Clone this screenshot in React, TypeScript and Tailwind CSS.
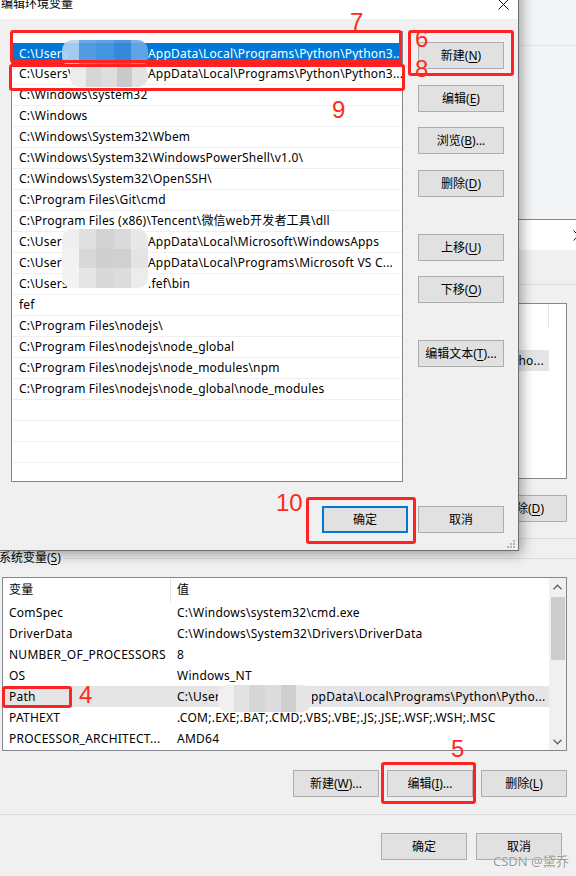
import type { ReactNode } from "react";

type PathRow = { lead?: string; text: string; selected?: boolean };

const EDIT_ROWS: PathRow[] = [
  { lead: "C:\\Users", text: "AppData\\Local\\Programs\\Python\\Python3..", selected: true },
  { lead: "C:\\Users\\", text: "AppData\\Local\\Programs\\Python\\Python3..." },
  { text: "C:\\Windows\\system32" },
  { text: "C:\\Windows" },
  { text: "C:\\Windows\\System32\\Wbem" },
  { text: "C:\\Windows\\System32\\WindowsPowerShell\\v1.0\\" },
  { text: "C:\\Windows\\System32\\OpenSSH\\" },
  { text: "C:\\Program Files\\Git\\cmd" },
  { text: "C:\\Program Files (x86)\\Tencent\\微信web开发者工具\\dll" },
  { lead: "C:\\Users", text: "AppData\\Local\\Microsoft\\WindowsApps" },
  { lead: "C:\\Users", text: "AppData\\Local\\Programs\\Microsoft VS C..." },
  { lead: "C:\\Users", text: ".fef\\bin" },
  { text: "fef" },
  { text: "C:\\Program Files\\nodejs\\" },
  { text: "C:\\Program Files\\nodejs\\node_global" },
  { text: "C:\\Program Files\\nodejs\\node_modules\\npm" },
  { text: "C:\\Program Files\\nodejs\\node_global\\node_modules" },
  { text: "" },
  { text: "" },
  { text: "" },
  { text: "" },
];

const SYSTEM_VARS = [
  { name: "ComSpec", value: "C:\\Windows\\system32\\cmd.exe" },
  { name: "DriverData", value: "C:\\Windows\\System32\\Drivers\\DriverData" },
  { name: "NUMBER_OF_PROCESSORS", value: "8" },
  { name: "OS", value: "Windows_NT" },
  { name: "Path", value: "", selected: true },
  { name: "PATHEXT", value: ".COM;.EXE;.BAT;.CMD;.VBS;.VBE;.JS;.JSE;.WSF;.WSH;.MSC" },
  { name: "PROCESSOR_ARCHITECT...", value: "AMD64" },
];

function WinButton({ children, focused = false }: { children?: ReactNode; focused?: boolean }) {
  return (
    <div
      className={[
        "flex h-[27px] w-[86px] shrink-0 items-center justify-center bg-[#e1e1e1] text-[12px] text-black",
        focused ? "border-2 border-[#0078d7]" : "border border-[#adadad]",
      ].join(" ")}
    >
      {children}
    </div>
  );
}

function Key({ k }: { k: string }) {
  return <span className="underline underline-offset-2">{k}</span>;
}

function CloseGlyph() {
  return (
    <svg width="11" height="11" viewBox="0 0 11 11" aria-hidden="true">
      <path d="M0.5 0.5 L10.5 10.5 M10.5 0.5 L0.5 10.5" stroke="#111" strokeWidth="1" />
    </svg>
  );
}

function Chevron({ down = false }: { down?: boolean }) {
  return (
    <svg width="9" height="6" viewBox="0 0 9 6" aria-hidden="true">
      <path
        d={down ? "M0.5 0.8 L4.5 4.8 L8.5 0.8" : "M0.5 5.2 L4.5 1.2 L8.5 5.2"}
        fill="none"
        stroke="#606060"
        strokeWidth="1.3"
      />
    </svg>
  );
}

function Mosaic({ className, cells }: { className: string; cells: string[] }) {
  return (
    <div className={["absolute grid overflow-hidden rounded-[10px]", className].join(" ")}>
      {cells.map((cell, i) => (
        <div key={i} className={cell} />
      ))}
    </div>
  );
}

function RedBox({ className }: { className: string }) {
  return <div className={["absolute rounded-[3px] border-[3px] border-[#ff2222]", className].join(" ")} />;
}

function Mark({ n, className }: { n: string; className: string }) {
  return (
    <span
      className={[
        "absolute font-['Liberation_Sans',Arial,sans-serif] text-[24px] leading-none text-[#ff2a1c]",
        className,
      ].join(" ")}
    >
      {n}
    </span>
  );
}

function BackWindow() {
  return (
    <div className="flex flex-col">
      {/* window further behind */}
      <div className="h-[219px] bg-[#f4f5f7]">
        <div className="h-[46px] border-b border-[#e4e5e7]" />
      </div>

      {/* 环境变量 */}
      <div className="border-t border-[#858585]">
        <div className="flex h-[30px] items-center justify-end overflow-hidden bg-white">
          <div className="-mr-[8px]">
            <CloseGlyph />
          </div>
        </div>

        <div className="flex flex-col pl-[2px] pr-[9px]">
          <div className="-mr-[9px] mt-[34px] border-t border-[#dcdcdc]" />

          {/* 用户变量 list, mostly under the dialog */}
          <div className="mt-[18px] flex h-[176px] flex-col overflow-hidden border border-[#828790] bg-white">
            <div className="flex h-[25px] shrink-0">
              <div className="w-[168px]" />
              <div className="w-[378px] border-r border-[#e5e5e5]" />
            </div>
            <div className="h-[21px]" />
            <div className="flex h-[21px] w-[546px] items-center justify-end bg-[#e5e5e5] pr-[5px] tracking-[0.25px]">
              Pytho...
            </div>
          </div>

          <div className="mt-[16px] flex justify-end gap-[8px]">
            <WinButton />
            <WinButton />
            <WinButton>
              删除(<Key k="D" />)
            </WinButton>
          </div>

          <div className="-mr-[9px] mt-[16px] border-t border-[#dcdcdc]" />

          {/* 系统变量 */}
          <div className="-ml-[3px] -mr-[9px] mt-[11px] flex h-[16px] items-center gap-[3px]">
            <span className="whitespace-nowrap">
              系统变量(<Key k="S" />)
            </span>
            <div className="flex-1 border-t border-[#dcdcdc]" />
          </div>

          <div className="mt-[11px] flex h-[174px] overflow-hidden border border-[#828790] bg-white">
            <div className="flex flex-1 flex-col tracking-[0.25px]">
              <div className="flex h-[24px] shrink-0">
                <div className="flex w-[168px] items-center border-r border-[#e5e5e5] pl-[6px]">变量</div>
                <div className="flex items-center pl-[6px]">值</div>
              </div>
              {SYSTEM_VARS.map((v) => (
                <div
                  key={v.name}
                  className={[
                    "flex h-[21px] shrink-0 items-center whitespace-nowrap",
                    v.selected ? "bg-[#e5e5e5]" : "",
                  ].join(" ")}
                >
                  <div className="w-[168px] shrink-0 overflow-hidden pl-[6px]">{v.name}</div>
                  {v.selected ? (
                    <div className="flex pl-[6px]">
                      <span className="w-[126px] shrink-0">C:\Users\</span>
                      <span>AppData\Local\Programs\Python\Pytho...</span>
                    </div>
                  ) : (
                    <div className="pl-[6px]">{v.value}</div>
                  )}
                </div>
              ))}
            </div>
            <div className="flex w-[17px] shrink-0 flex-col bg-[#f0f0f0]">
              <div className="flex h-[17px] items-center justify-center">
                <Chevron />
              </div>
              <div className="ml-[2px] mr-[1px] mt-[2px] h-[63px] bg-[#cdcdcd]" />
              <div className="flex-1" />
              <div className="flex h-[17px] items-center justify-center">
                <Chevron down />
              </div>
            </div>
          </div>

          <div className="mt-[19px] flex justify-end gap-[8px]">
            <WinButton>
              新建(<Key k="W" />)...
            </WinButton>
            <WinButton>
              编辑(<Key k="I" />)...
            </WinButton>
            <WinButton>
              删除(<Key k="L" />)
            </WinButton>
          </div>

          <div className="-ml-[2px] -mr-[9px] mt-[17px] border-t border-[#dcdcdc]" />

          <div className="mt-[18px] flex justify-end gap-[9px] pr-[5px]">
            <WinButton>确定</WinButton>
            <WinButton>取消</WinButton>
          </div>
        </div>
      </div>
    </div>
  );
}

function EditDialog() {
  return (
    <div className="absolute left-[-1px] top-[-12px] flex h-[563px] w-[520px] flex-col border border-[#6d6d6d] bg-[#f0f0f0] shadow-[3px_3px_12px_rgba(0,0,0,0.35)]">
      <div className="flex h-[30px] shrink-0 items-center justify-between bg-white pl-[1px] pr-[9px]">
        <span>编辑环境变量</span>
        <CloseGlyph />
      </div>

      <div className="flex flex-1 flex-col pl-[11px] pr-[14px] pt-[12px]">
        <div className="flex">
          <div className="h-[451px] w-[392px] overflow-hidden border border-[#828790] bg-white pt-[11px] tracking-[0.2px]">
            {EDIT_ROWS.map((row, i) => (
              <div
                key={i}
                className={[
                  "flex h-[21px] items-center overflow-hidden whitespace-nowrap pl-[7px]",
                  row.selected ? "bg-[#0078d7] text-white" : "border-b border-[#f0f0f0]",
                ].join(" ")}
              >
                {row.lead ? <span className="w-[129px] shrink-0">{row.lead}</span> : null}
                <span>{row.text}</span>
              </div>
            ))}
          </div>

          <div className="ml-[15px] flex w-[86px] flex-col pt-[11px]">
            <WinButton>
              新建(<Key k="N" />)
            </WinButton>
            <div className="mt-[16px]">
              <WinButton>
                编辑(<Key k="E" />)
              </WinButton>
            </div>
            <div className="mt-[15px]">
              <WinButton>
                浏览(<Key k="B" />)...
              </WinButton>
            </div>
            <div className="mt-[16px]">
              <WinButton>
                删除(<Key k="D" />)
              </WinButton>
            </div>
            <div className="mt-[37px]">
              <WinButton>
                上移(<Key k="U" />)
              </WinButton>
            </div>
            <div className="mt-[15px]">
              <WinButton>
                下移(<Key k="O" />)
              </WinButton>
            </div>
            <div className="mt-[37px]">
              <WinButton>
                编辑文本(<Key k="T" />)...
              </WinButton>
            </div>
          </div>
        </div>

        <div className="mt-[24px] flex justify-end gap-[10px]">
          <WinButton focused>确定</WinButton>
          <WinButton>取消</WinButton>
        </div>
      </div>

      <svg className="absolute bottom-[2px] right-[3px]" width="8" height="8" viewBox="0 0 8 8" aria-hidden="true">
        <rect x="6" y="0" width="2" height="2" fill="#b4b4b4" />
        <rect x="3" y="3" width="2" height="2" fill="#b4b4b4" />
        <rect x="6" y="3" width="2" height="2" fill="#b4b4b4" />
        <rect x="0" y="6" width="2" height="2" fill="#b4b4b4" />
        <rect x="3" y="6" width="2" height="2" fill="#b4b4b4" />
        <rect x="6" y="6" width="2" height="2" fill="#b4b4b4" />
      </svg>
    </div>
  );
}

export default function App() {
  return (
    <div className="relative h-[876px] w-[576px] overflow-hidden bg-[#f0f0f0] font-['Noto_Sans','Noto_Sans_CJK_SC',sans-serif] text-[12px] leading-[16px] text-black">
      <BackWindow />
      <EditDialog />

      {/* redacted user names */}
      <Mosaic
        className="left-[62px] top-[40px] h-[27px] w-[86px] grid-cols-5 opacity-90"
        cells={["bg-[#b5d3f2]", "bg-[#5a9fe2]", "bg-[#4d98e1]", "bg-[#3b8bdc]", "bg-[#6aaae6]"]}
      />
      <Mosaic
        className="left-[70px] top-[64px] h-[23px] w-[78px] grid-cols-5"
        cells={["bg-[#ececec]", "bg-[#d6d6d6]", "bg-[#dedede]", "bg-[#cacaca]", "bg-[#e2e2e2]"]}
      />
      <Mosaic
        className="left-[62px] top-[229px] h-[59px] w-[86px] grid-cols-5 grid-rows-3"
        cells={[
          "bg-[#eeeeee]", "bg-[#e0e0e0]", "bg-[#d3d3d3]", "bg-[#dadada]", "bg-[#e8e8e8]",
          "bg-[#f2f2f2]", "bg-[#d8d8d8]", "bg-[#cfcfcf]", "bg-[#d0d0d0]", "bg-[#e4e4e4]",
          "bg-[#f3f3f3]", "bg-[#e6e6e6]", "bg-[#d9d9d9]", "bg-[#dcdcdc]", "bg-[#ececec]",
        ]}
      />
      <Mosaic
        className="left-[218px] top-[685px] h-[27px] w-[94px] grid-cols-6"
        cells={["bg-[#f0f0f0]", "bg-[#e2e2e2]", "bg-[#d6d6d6]", "bg-[#dcdcdc]", "bg-[#cfcfcf]", "bg-[#e6e6e6]"]}
      />

      {/* annotations */}
      <RedBox className="left-[10px] top-[30px] h-[33px] w-[392px]" />
      <RedBox className="left-[9px] top-[64px] h-[27px] w-[396px]" />
      <RedBox className="left-[408px] top-[30px] h-[46px] w-[106px]" />
      <RedBox className="left-[306px] top-[497px] h-[47px] w-[110px]" />
      <RedBox className="left-[2px] top-[686px] h-[22px] w-[70px]" />
      <RedBox className="left-[381px] top-[762px] h-[42px] w-[95px]" />

      <Mark n="7" className="left-[350px] top-[10px]" />
      <Mark n="6" className="left-[415px] top-[27px]" />
      <Mark n="8" className="left-[415px] top-[57px]" />
      <Mark n="9" className="left-[332px] top-[98px]" />
      <Mark n="10" className="left-[276px] top-[491px]" />
      <Mark n="4" className="left-[79px] top-[683px]" />
      <Mark n="5" className="left-[451px] top-[737px]" />

      <span className="absolute left-[493px] top-[853px] text-[13px] text-[#9a9a9a] [text-shadow:0_0_2px_#fff]">
        CSDN @黛乔
      </span>
    </div>
  );
}
